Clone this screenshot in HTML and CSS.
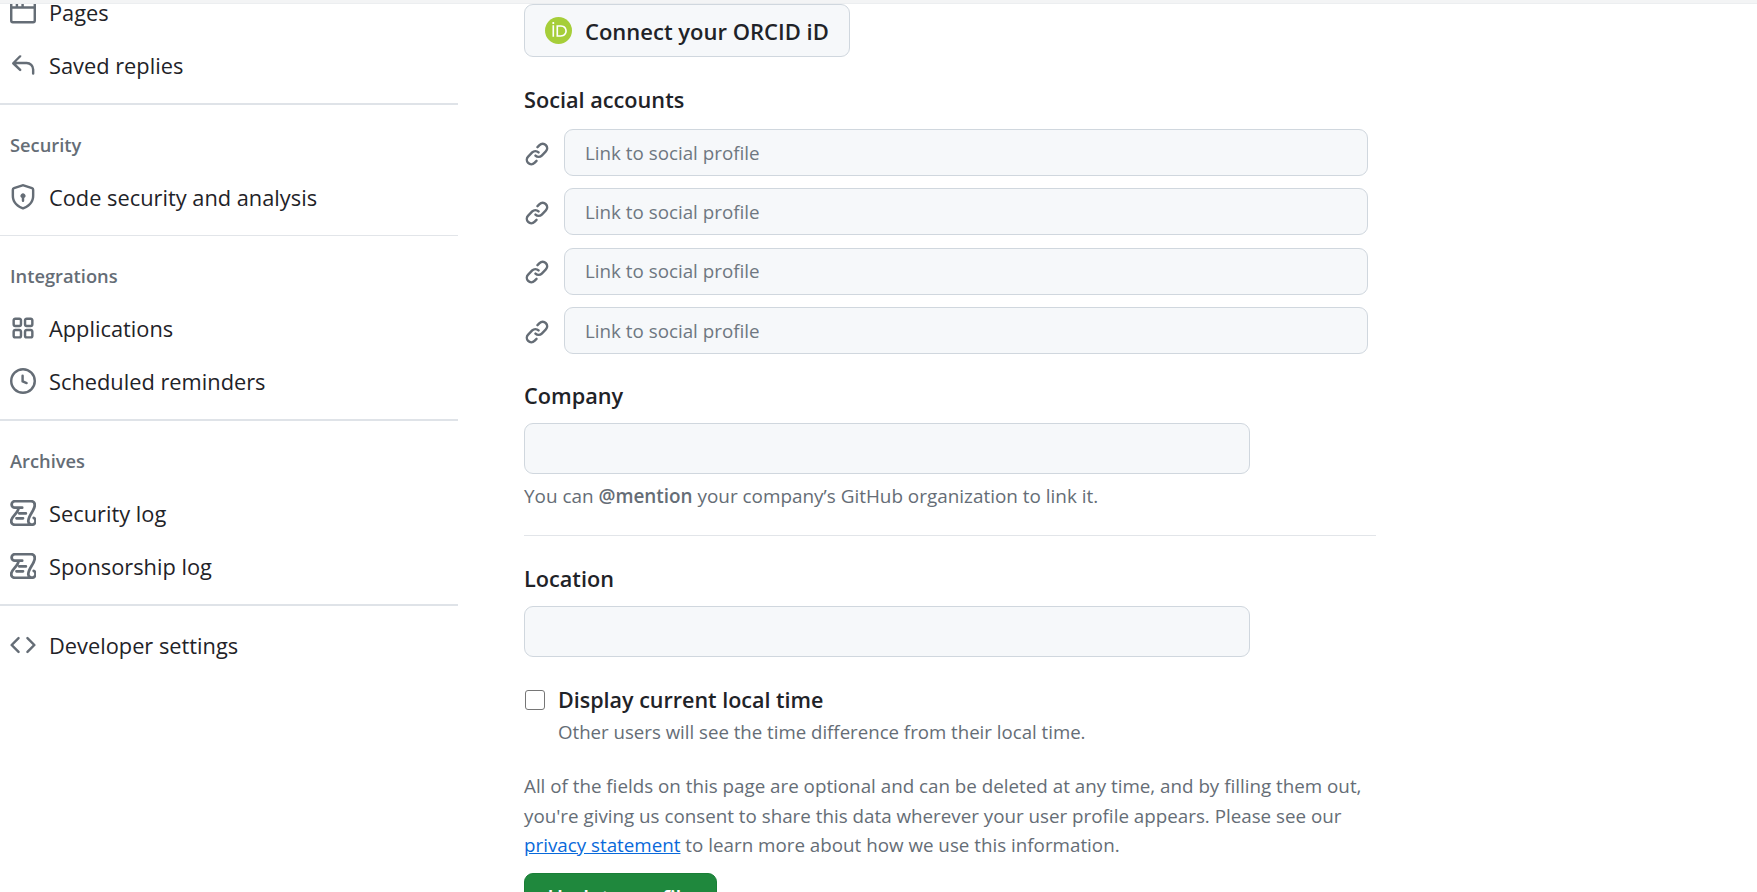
FILE: index.html
```html
<!DOCTYPE html>
<html lang="en">
<head>
    <meta charset="UTF-8">
    <title>Your profile</title>
    <link rel="stylesheet" href="styles.css">
</head>
<body>

<div class="topbar"></div>

<div class="layout">
    <aside class="sidebar">
        <div class="navGroup firstGroup">
            <a class="navItem" href="#">
                <svg class="icon" viewBox="0 0 16 16"><path fill-rule="evenodd" d="M0 2.75C0 1.784.784 1 1.75 1h12.5c.966 0 1.75.784 1.75 1.75v10.5A1.75 1.75 0 0 1 14.25 15H1.75A1.75 1.75 0 0 1 0 13.25ZM14.5 6h-13v7.25c0 .138.112.25.25.25h12.5a.25.25 0 0 0 .25-.25Zm-6-3.5v2h6V2.75a.25.25 0 0 0-.25-.25ZM5 2.5v2h2v-2Zm-3.25 0a.25.25 0 0 0-.25.25V4.5h2v-2Z"/></svg>
                Pages
            </a>
            <a class="navItem" href="#">
                <svg class="icon" viewBox="0 0 16 16"><path d="M6.78 1.97a.75.75 0 0 1 0 1.06L3.81 6h6.44A4.75 4.75 0 0 1 15 10.75v2.5a.75.75 0 0 1-1.5 0v-2.5a3.25 3.25 0 0 0-3.25-3.25H3.81l2.97 2.97a.749.749 0 0 1-.326 1.275.749.749 0 0 1-.734-.215L1.47 7.53a.75.75 0 0 1 0-1.06l4.25-4.25a.75.75 0 0 1 1.06 0Z"/></svg>
                Saved replies
            </a>
        </div>

        <div class="navGroup thinLine">
            <div class="navHeading">Security</div>
            <a class="navItem" href="#">
                <svg class="icon" viewBox="0 0 16 16"><path fill-rule="evenodd" d="M7.467.133a1.748 1.748 0 0 1 1.066 0l5.25 1.68A1.75 1.75 0 0 1 15 3.48V7c0 1.566-.32 3.182-1.303 4.682-.983 1.498-2.585 2.813-5.032 3.855a1.697 1.697 0 0 1-1.33 0c-2.447-1.042-4.049-2.357-5.032-3.855C1.32 10.182 1 8.566 1 7V3.48a1.75 1.75 0 0 1 1.217-1.667Zm.61 1.429a.25.25 0 0 0-.153 0l-5.25 1.68a.25.25 0 0 0-.174.238V7c0 1.358.275 2.666 1.057 3.86.784 1.194 2.121 2.34 4.366 3.297a.196.196 0 0 0 .154 0c2.245-.956 3.582-2.104 4.366-3.298C13.225 9.666 13.5 8.36 13.5 7V3.48a.251.251 0 0 0-.174-.237l-5.25-1.68ZM8.75 8.582v1.668a.75.75 0 0 1-1.5 0V8.582a1.5 1.5 0 1 1 1.5 0Z"/></svg>
                Code security and analysis
            </a>
        </div>

        <div class="navGroup">
            <div class="navHeading">Integrations</div>
            <a class="navItem" href="#">
                <svg class="icon" viewBox="0 0 16 16"><path fill-rule="evenodd" d="M1.5 3.25c0-.966.784-1.75 1.75-1.75h2.5c.966 0 1.75.784 1.75 1.75v2.5A1.75 1.75 0 0 1 5.75 7.5h-2.5A1.75 1.75 0 0 1 1.5 5.75Zm7 0c0-.966.784-1.75 1.75-1.75h2.5c.966 0 1.75.784 1.75 1.75v2.5a1.75 1.75 0 0 1-1.75 1.75h-2.5A1.75 1.75 0 0 1 8.5 5.75Zm-7 7c0-.966.784-1.75 1.75-1.75h2.5c.966 0 1.75.784 1.75 1.75v2.5a1.75 1.75 0 0 1-1.75 1.75h-2.5a1.75 1.75 0 0 1-1.75-1.75Zm7 0c0-.966.784-1.75 1.75-1.75h2.5c.966 0 1.75.784 1.75 1.75v2.5a1.75 1.75 0 0 1-1.75 1.75h-2.5a1.75 1.75 0 0 1-1.75-1.75ZM3.25 3a.25.25 0 0 0-.25.25v2.5c0 .138.112.25.25.25h2.5A.25.25 0 0 0 6 5.75v-2.5A.25.25 0 0 0 5.75 3Zm7 0a.25.25 0 0 0-.25.25v2.5c0 .138.112.25.25.25h2.5a.25.25 0 0 0 .25-.25v-2.5a.25.25 0 0 0-.25-.25Zm-7 7a.25.25 0 0 0-.25.25v2.5c0 .138.112.25.25.25h2.5a.25.25 0 0 0 .25-.25v-2.5a.25.25 0 0 0-.25-.25Zm7 0a.25.25 0 0 0-.25.25v2.5c0 .138.112.25.25.25h2.5a.25.25 0 0 0 .25-.25v-2.5a.25.25 0 0 0-.25-.25Z"/></svg>
                Applications
            </a>
            <a class="navItem" href="#">
                <svg class="icon" viewBox="0 0 16 16"><path d="M8 0a8 8 0 1 1 0 16A8 8 0 0 1 8 0ZM1.5 8a6.5 6.5 0 1 0 13 0 6.5 6.5 0 0 0-13 0Zm7-3.25v2.992l2.028.812a.75.75 0 0 1-.557 1.392l-2.5-1A.751.751 0 0 1 7 8.25v-3.5a.75.75 0 0 1 1.5 0Z"/></svg>
                Scheduled reminders
            </a>
        </div>

        <div class="navGroup">
            <div class="navHeading">Archives</div>
            <a class="navItem" href="#">
                <svg class="icon logIcon" viewBox="0 0 16 16"><path d="M3 4.75A2 2 0 0 1 3 .75H13A2.25 2.25 0 0 1 15.25 3C15.25 6.5 11.25 9.5 11.25 13A2.25 2.25 0 1 0 14.6 11M3 4.75H7.5M5.2 5C5.2 8 .75 10 .75 13A2.25 2.25 0 0 0 3 15.25H13M5.75 8.25H9.75M4 11.25H8"/></svg>
                Security log
            </a>
            <a class="navItem" href="#">
                <svg class="icon logIcon" viewBox="0 0 16 16"><path d="M3 4.75A2 2 0 0 1 3 .75H13A2.25 2.25 0 0 1 15.25 3C15.25 6.5 11.25 9.5 11.25 13A2.25 2.25 0 1 0 14.6 11M3 4.75H7.5M5.2 5C5.2 8 .75 10 .75 13A2.25 2.25 0 0 0 3 15.25H13M5.75 8.25H9.75M4 11.25H8"/></svg>
                Sponsorship log
            </a>
        </div>

        <div class="navGroup noLine">
            <a class="navItem" href="#">
                <svg class="icon" viewBox="0 0 16 16"><path d="m11.28 3.22 4.25 4.25a.75.75 0 0 1 0 1.06l-4.25 4.25a.749.749 0 0 1-1.275-.326.749.749 0 0 1 .215-.734L13.94 8l-3.72-3.72a.749.749 0 0 1 .326-1.275.749.749 0 0 1 .734.215Zm-6.56 0a.751.751 0 0 1 1.042.018.751.751 0 0 1 .018 1.042L2.06 8l3.72 3.72a.749.749 0 0 1-.326 1.275.749.749 0 0 1-.734-.215L.47 8.53a.75.75 0 0 1 0-1.06Z"/></svg>
                Developer settings
            </a>
        </div>
    </aside>

    <main class="content">
        <button class="orcidButton">
            <svg class="orcidLogo" viewBox="0 0 256 256">
                <circle cx="128" cy="128" r="128" fill="#a6ce39"/>
                <path fill="#fff" d="M86.300 186.200H70.900V79.100h15.400v107.100zM108.900 79.100h41.600c39.600 0 57 28.300 57 53.600 0 27.500-21.500 53.600-56.800 53.600h-41.800V79.100zm15.400 93.300h24.500c34.900 0 42.900-26.500 42.900-39.700 0-21.500-13.700-39.700-43.700-39.700h-23.700v79.400zM88.700 56.800c0 5.500-4.500 10.100-10.100 10.100-5.600 0-10.100-4.600-10.100-10.100 0-5.600 4.500-10.100 10.100-10.100 5.600 0 10.100 4.600 10.100 10.100z"/>
            </svg>
            Connect your ORCID iD
        </button>

        <div class="fieldLabel socialLabel">Social accounts</div>
        <div class="socialRow">
            <svg class="linkIcon" viewBox="0 0 16 16"><path d="m7.775 3.275 1.25-1.25a3.5 3.5 0 1 1 4.95 4.95l-2.5 2.5a3.5 3.5 0 0 1-4.95 0 .751.751 0 0 1 .018-1.042.751.751 0 0 1 1.042-.018 1.998 1.998 0 0 0 2.83 0l2.5-2.5a2.002 2.002 0 0 0-2.83-2.83l-1.25 1.25a.751.751 0 0 1-1.042-.018.751.751 0 0 1-.018-1.042Zm-4.69 9.640a1.998 1.998 0 0 0 2.830 0l1.250-1.250a.751.751 0 0 1 1.042.018.751.751 0 0 1 .018 1.042l-1.250 1.250a3.500 3.500 0 1 1-4.950-4.950l2.500-2.500a3.500 3.500 0 0 1 4.950 0 .751.751 0 0 1-.018 1.042.751.751 0 0 1-1.042.018 1.998 1.998 0 0 0-2.830 0l-2.500 2.500a1.998 1.998 0 0 0 0 2.830Z"/></svg>
            <input class="textInput socialInput" type="text" placeholder="Link to social profile">
        </div>
        <div class="socialRow">
            <svg class="linkIcon" viewBox="0 0 16 16"><path d="m7.775 3.275 1.25-1.25a3.5 3.5 0 1 1 4.95 4.95l-2.5 2.5a3.5 3.5 0 0 1-4.95 0 .751.751 0 0 1 .018-1.042.751.751 0 0 1 1.042-.018 1.998 1.998 0 0 0 2.83 0l2.5-2.5a2.002 2.002 0 0 0-2.83-2.83l-1.25 1.25a.751.751 0 0 1-1.042-.018.751.751 0 0 1-.018-1.042Zm-4.69 9.640a1.998 1.998 0 0 0 2.830 0l1.250-1.250a.751.751 0 0 1 1.042.018.751.751 0 0 1 .018 1.042l-1.250 1.250a3.500 3.500 0 1 1-4.950-4.950l2.500-2.500a3.500 3.500 0 0 1 4.950 0 .751.751 0 0 1-.018 1.042.751.751 0 0 1-1.042.018 1.998 1.998 0 0 0-2.830 0l-2.500 2.500a1.998 1.998 0 0 0 0 2.830Z"/></svg>
            <input class="textInput socialInput" type="text" placeholder="Link to social profile">
        </div>
        <div class="socialRow">
            <svg class="linkIcon" viewBox="0 0 16 16"><path d="m7.775 3.275 1.25-1.25a3.5 3.5 0 1 1 4.95 4.95l-2.5 2.5a3.5 3.5 0 0 1-4.95 0 .751.751 0 0 1 .018-1.042.751.751 0 0 1 1.042-.018 1.998 1.998 0 0 0 2.83 0l2.5-2.5a2.002 2.002 0 0 0-2.83-2.83l-1.25 1.25a.751.751 0 0 1-1.042-.018.751.751 0 0 1-.018-1.042Zm-4.69 9.640a1.998 1.998 0 0 0 2.830 0l1.250-1.250a.751.751 0 0 1 1.042.018.751.751 0 0 1 .018 1.042l-1.250 1.250a3.500 3.500 0 1 1-4.950-4.950l2.500-2.500a3.500 3.500 0 0 1 4.950 0 .751.751 0 0 1-.018 1.042.751.751 0 0 1-1.042.018 1.998 1.998 0 0 0-2.830 0l-2.500 2.500a1.998 1.998 0 0 0 0 2.830Z"/></svg>
            <input class="textInput socialInput" type="text" placeholder="Link to social profile">
        </div>
        <div class="socialRow">
            <svg class="linkIcon" viewBox="0 0 16 16"><path d="m7.775 3.275 1.25-1.25a3.5 3.5 0 1 1 4.95 4.95l-2.5 2.5a3.5 3.5 0 0 1-4.95 0 .751.751 0 0 1 .018-1.042.751.751 0 0 1 1.042-.018 1.998 1.998 0 0 0 2.83 0l2.5-2.5a2.002 2.002 0 0 0-2.83-2.83l-1.25 1.25a.751.751 0 0 1-1.042-.018.751.751 0 0 1-.018-1.042Zm-4.69 9.640a1.998 1.998 0 0 0 2.830 0l1.250-1.250a.751.751 0 0 1 1.042.018.751.751 0 0 1 .018 1.042l-1.250 1.250a3.500 3.500 0 1 1-4.950-4.950l2.500-2.500a3.500 3.500 0 0 1 4.950 0 .751.751 0 0 1-.018 1.042.751.751 0 0 1-1.042.018 1.998 1.998 0 0 0-2.830 0l-2.500 2.500a1.998 1.998 0 0 0 0 2.830Z"/></svg>
            <input class="textInput socialInput" type="text" placeholder="Link to social profile">
        </div>

        <div class="fieldLabel companyLabel">Company</div>
        <input class="textInput wideInput" type="text">
        <p class="note companyNote">You can <strong>@mention</strong> your company’s GitHub organization to link it.</p>
        <hr class="divider">

        <div class="fieldLabel locationLabel">Location</div>
        <input class="textInput wideInput" type="text">

        <div class="checkRow">
            <span class="checkBox"></span>
            <div>
                <div class="checkLabel">Display current local time</div>
                <p class="note checkNote">Other users will see the time difference from their local time.</p>
            </div>
        </div>

        <p class="note consent">All of the fields on this page are optional and can be deleted at any time, and by filling them out, you're giving us consent to share this data wherever your user profile appears. Please see our <a href="#">privacy statement</a> to learn more about how we use this information.</p>

        <button class="updateButton">Update profile</button>
    </main>
</div>

</body>
</html>
```

FILE: styles.css
```css
html, body {
    height: 100%;
}

body {
    margin: 0;
    height: 892px;
    overflow: hidden;
    background-color: #fff;
    color: #1f2328;
    font-family: "Open Sans", "Noto Sans", sans-serif;
    font-size: 21.8px;
}

.topbar {
    height: 3px;
    background-color: #f3f4f5;
    border-bottom: 1px solid #eceef0;
}

.layout {
    display: flex;
    height: 888px;
    overflow: hidden;
}

/* Sidebar */
.sidebar {
    width: 458px;
    flex-shrink: 0;
}

.navGroup {
    padding-bottom: 12px;
    border-bottom: 2px solid #dfe3e8;
}

.firstGroup {
    margin-top: -19px;
}

.thinLine {
    border-bottom: 1px solid #e2e5e9;
}

.noLine {
    padding-top: 12px;
    border-bottom: none;
}

.navHeading {
    padding: 24px 0 9px 10px;
    line-height: 32px;
    font-size: 18.3px;
    font-weight: 600;
    color: #656d76;
}

.navItem {
    display: flex;
    align-items: center;
    gap: 13px;
    box-sizing: border-box;
    height: 53px;
    padding: 1px 0 0 10px;
    color: #1f2328;
    text-decoration: none;
}

.icon {
    width: 26px;
    height: 26px;
    flex-shrink: 0;
    fill: #656d76;
}

.logIcon {
    fill: none;
    stroke: #656d76;
    stroke-width: 1.7;
    stroke-linecap: round;
}

/* Main form */
.content {
    width: 852px;
    margin-left: 66px;
}

.orcidButton {
    display: flex;
    align-items: center;
    gap: 13px;
    width: 326px;
    height: 53px;
    padding: 0 20px;
    background-color: #f6f8fa;
    border: 1px solid #d0d7de;
    border-radius: 9px;
    color: #1f2328;
    font-family: inherit;
    font-size: 22px;
    font-weight: 600;
}

.orcidLogo {
    width: 27px;
    height: 27px;
    flex-shrink: 0;
}

.fieldLabel {
    font-size: 21.7px;
    font-weight: 600;
    line-height: 30px;
}

.socialLabel {
    margin-top: 28px;
    margin-bottom: 14px;
}

.socialRow {
    display: flex;
    align-items: center;
    gap: 14px;
    margin-bottom: 12.4px;
}

.linkIcon {
    width: 26px;
    height: 26px;
    flex-shrink: 0;
    fill: #656d76;
    position: relative;
    top: 1px;
}

.textInput {
    display: block;
    box-sizing: border-box;
    background-color: #f6f8fa;
    border: 1px solid #d0d7de;
    border-radius: 9px;
    color: #1f2328;
    font-family: inherit;
    font-size: 18.8px;
}

.textInput::placeholder {
    color: #6e7781;
    opacity: 1;
}

.socialInput {
    width: 804px;
    height: 47px;
    padding: 0 20px;
}

.wideInput {
    width: 726px;
    height: 51px;
    padding: 0 20px;
}

.companyLabel {
    margin-top: 27px;
    margin-bottom: 12px;
}

.note {
    margin: 0;
    font-size: 18.8px;
    color: #656d76;
}

.note strong {
    font-weight: 600;
}

.companyNote {
    margin-top: 8px;
    line-height: 28px;
    font-size: 18.9px;
}

.divider {
    width: 852px;
    margin: 25px 0 0;
    border: none;
    border-top: 1px solid #e2e5e9;
}

.locationLabel {
    margin-top: 28px;
    margin-bottom: 12px;
}

.checkRow {
    display: flex;
    gap: 13px;
    margin-top: 28px;
}

.checkBox {
    box-sizing: border-box;
    width: 20px;
    height: 20px;
    margin-top: 5px;
    margin-left: 1px;
    flex-shrink: 0;
    background-color: #fff;
    border: 1.5px solid #767676;
    border-radius: 3px;
}

.checkLabel {
    font-size: 21.5px;
    font-weight: 600;
    line-height: 30px;
}

.checkNote {
    margin-top: 3px;
    line-height: 28px;
    font-size: 18.65px;
}

.consent {
    margin-top: 26px;
    width: 852px;
    line-height: 29.5px;
}

.consent a {
    color: #0969da;
    text-decoration: underline;
}

.updateButton {
    display: block;
    width: 193px;
    height: 50px;
    margin-top: 12px;
    background-color: #1f883d;
    border: 1px solid #1a7f37;
    border-radius: 9px;
    color: #fff;
    font-family: inherit;
    font-size: 21px;
    font-weight: 600;
}
```
